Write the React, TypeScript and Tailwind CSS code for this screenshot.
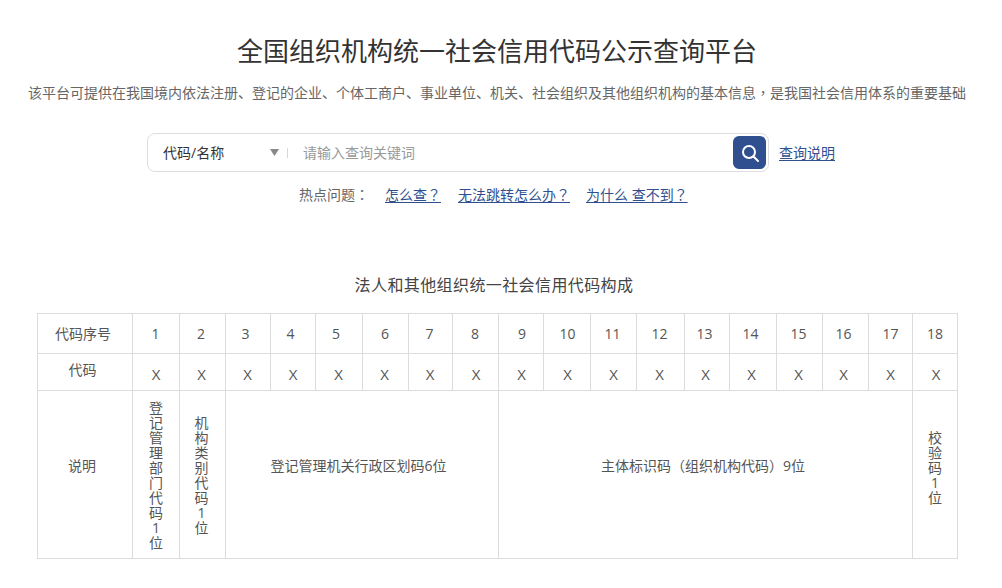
import React from "react";

const widths = [95, 47, 46, 45, 45, 47, 46, 44, 46, 45, 47, 46, 48, 45, 47, 46, 46, 44, 45];
const numShift = [-0.5, -1.5, -2.5, -2.5, -3, -0.5, -1, -0.5, 1, 0.5, -1, -1, -2.5, -2.5, -1, -2, 0, 0];
const xShift = [0, -1, -0.5, 0, -0.5, -1, -0.5, 0.5, 0.5, 0.5, 0, -1, -1.5, -1.5, -1, -2, 0, 1];
const cell = "border border-[#dcdcdc] text-center align-middle p-0 font-normal";

function shift(n: number) {
  return { paddingLeft: Math.max(0, n * 2), paddingRight: Math.max(0, -n * 2) };
}

function Vertical({ text }: { text: string }) {
  return <div className="mx-auto w-[14px] break-all leading-[15px] text-[14px]">{text}</div>;
}

function Mark({ children }: { children: string }) {
  return <span className="font-['Noto_Sans_CJK_TC',sans-serif]">{children}</span>;
}

export default function App() {
  const nums = Array.from({ length: 18 }, (_, i) => i + 1);
  const link = "text-[#2f4f8f] underline underline-offset-2";
  return (
    <div className="w-[994px] h-[588px] overflow-hidden bg-white text-[#555] font-['Open_Sans','Noto_Sans_CJK_SC',sans-serif]">
      <h1 className="pt-[33px] text-center text-[26px] leading-[36px] font-normal text-[#333]">
        全国组织机构统一社会信用代码公示查询平台
      </h1>
      <p className="mt-[13px] text-center text-[14px] leading-[20px] text-[#666] whitespace-nowrap">
        该平台可提供在我国境内依法注册、登记的企业、个体工商户、事业单位、机关、社会组织及其他组织机构的基本信息<Mark>，</Mark>是我国社会信用体系的重要基础
      </p>

      <div className="mt-[30px] ml-[147px] flex items-center">
        <div className="flex h-[39px] w-[622px] items-center rounded-[8px] border border-[#dedede] bg-white pr-[2px]">
          <span className="ml-[15px] w-[107px] text-[14px] leading-[20px] text-[#333]">代码/名称</span>
          <svg width="9" height="7" viewBox="0 0 9 7"><path d="M0 0h9L4.5 7z" fill="#888" /></svg>
          <span className="ml-[8px] h-[10px] w-px bg-[#d8d8d8]" />
          <span className="ml-[15px] flex-1 text-[14px] leading-[20px] text-[#999]">请输入查询关键词</span>
          <button className="flex h-[33px] w-[33px] items-center justify-center rounded-[6px] bg-[#2f4f8f]">
            <svg width="18" height="18" viewBox="0 0 18 18" fill="none" stroke="white" strokeWidth="2">
              <circle cx="8" cy="8" r="6" />
              <path d="M12.5 12.5L17 17" strokeLinecap="round" />
            </svg>
          </button>
        </div>
        <a className={"ml-[10px] text-[14px] " + link}>查询说明</a>
      </div>

      <div className="mt-[12px] ml-[299px] flex items-center text-[14px] leading-[20px]">
        <span className="w-[86px] text-[#666]">热点问题<Mark>：</Mark></span>
        <a className={link}>怎么查<Mark>？</Mark></a>
        <a className={"ml-[17px] " + link}>无法跳转怎么办<Mark>？</Mark></a>
        <a className={"ml-[16px] " + link}>为什么 查不到<Mark>？</Mark></a>
      </div>

      <h2 className="mt-[69px] pr-[6px] text-center text-[16px] tracking-[0.4px] leading-[22px] font-normal text-[#444]">
        法人和其他组织统一社会信用代码构成
      </h2>

      <table className="mt-[17px] ml-[37px] w-[921px] table-fixed border-collapse text-[14px] text-[#555]">
        <colgroup>
          {widths.map((w, i) => (
            <col key={i} style={{ width: w }} />
          ))}
        </colgroup>
        <tbody>
          <tr className="h-[40px]">
            <td className={cell + " pr-[4px]"}>代码序号</td>
            {nums.map((n, i) => (
              <td key={n} className={cell} style={shift(numShift[i])}>{n}</td>
            ))}
          </tr>
          <tr className="h-[37px]">
            <td className={cell + " pr-[5px] pb-[5px]"}>代码</td>
            {nums.map((n, i) => (
              <td key={n} className={cell + " pt-[4px] text-[15px]"} style={shift(xShift[i])}>X</td>
            ))}
          </tr>
          <tr className="h-[168px]">
            <td className={cell + " pr-[6px] pb-[18px]"}>说明</td>
            <td className={cell}><Vertical text="登记管理部门代码1位" /></td>
            <td className={cell + " pr-[2px]"}><Vertical text="机构类别代码1位" /></td>
            <td className={cell + " pr-[7px] pb-[18px]"} colSpan={6}>登记管理机关行政区划码6位</td>
            <td className={cell + " pr-[5px] pb-[18px]"} colSpan={9}>主体标识码<Mark>（</Mark>组织机构代码<Mark>）</Mark>9位</td>
            <td className={cell + " pb-[15px]"}><Vertical text="校验码1位" /></td>
          </tr>
        </tbody>
      </table>
    </div>
  );
}
